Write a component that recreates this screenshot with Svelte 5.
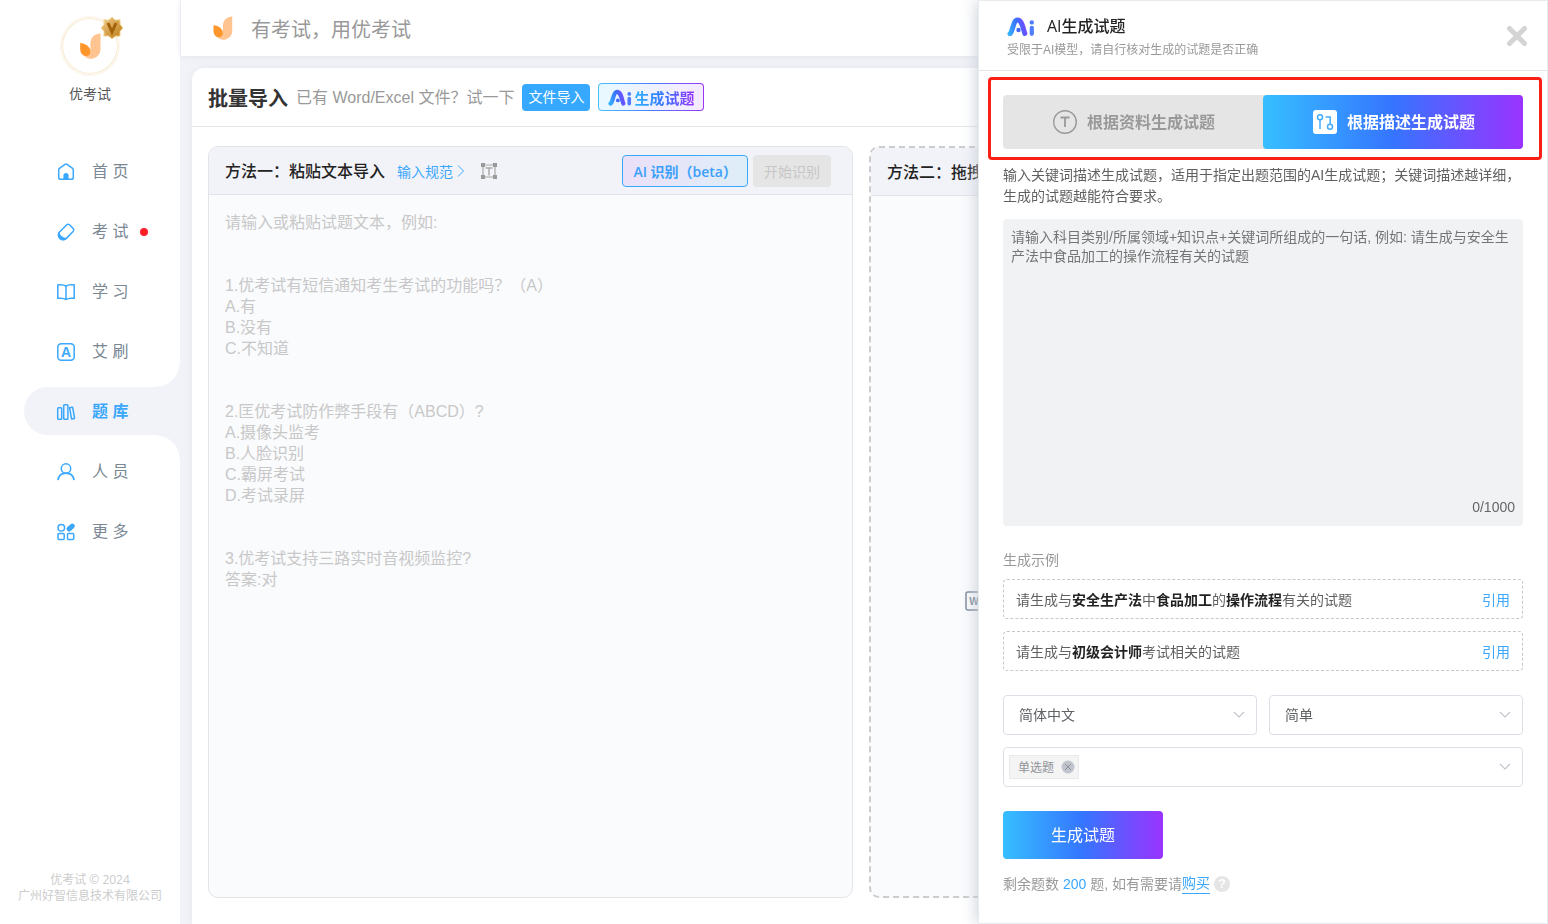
<svelte:head>
  <title>批量导入 - 优考试</title>
</svelte:head>

<script>
  const menu = [
    { icon: 'home', label: '首 页' },
    { icon: 'exam', label: '考 试', dot: true },
    { icon: 'book', label: '学 习' },
    { icon: 'brush', label: '艾 刷' },
    { icon: 'bank', label: '题 库', active: true },
    { icon: 'user', label: '人 员' },
    { icon: 'more', label: '更 多' }
  ];

  const sample = `请输入或粘贴试题文本，例如:


1.优考试有短信通知考生考试的功能吗？（A）
A.有
B.没有
C.不知道


2.匡优考试防作弊手段有（ABCD）?
A.摄像头监考
B.人脸识别
C.霸屏考试
D.考试录屏


3.优考试支持三路实时音视频监控?
答案:对`;

  // odd parts are highlighted
  const examples = [
    ['请生成与', '安全生产法', '中', '食品加工', '的', '操作流程', '有关的试题'],
    ['请生成与', '初级会计师', '考试相关的试题']
  ];

  let source = $state('');
  let prompt = $state('');
  let tab = $state('desc');
  let open = $state(true);
  let tags = $state(['单选题']);
  let picked = $state('');

  function addTag() {
    if (picked && !tags.includes(picked)) tags.push(picked);
    picked = '';
  }

  function removeTag(tag) {
    tags = tags.filter((t) => t !== tag);
  }
</script>

{#snippet flame(width, height)}
  <svg {width} {height} viewBox="0 0 21 26" aria-hidden="true">
    <path d="M20.5 .3V16a9.5 9.5 0 0 1-18 4.5l7.9-2V11C10.400 5 14 1 20.500 .3z" fill="#ffc48f" />
    <path d="M.2 10C6 10.500 10.400 14 10.400 18.500c0 2.500-1.600 4.500-4.200 4.500C2.500 23 .2 20 .2 16z" fill="#ff962b" />
  </svg>
{/snippet}

{#snippet aiLogo(id, width, height)}
  <svg {width} {height} viewBox="0 0 28 20" fill="none" aria-hidden="true">
    <defs>
      <linearGradient {id} gradientUnits="userSpaceOnUse" x1="1" y1="15" x2="21" y2="10">
        <stop offset="0" stop-color="#36b4ff" />
        <stop offset=".5" stop-color="#3a70ff" />
        <stop offset="1" stop-color="#8540ff" />
      </linearGradient>
    </defs>
    <path d="M3 17.700C6 15.500 6 4 10.500 4c4.500 0 5.300 7.500 7.300 13.500" stroke="url(#{id})" stroke-width="5" stroke-linecap="round" />
    <circle cx="11.500" cy="14" r="2.200" fill="#4468ff" />
    <path d="M24.800 11.800v6" stroke="#4f7dff" stroke-width="4.200" stroke-linecap="round" />
    <circle cx="24.800" cy="6.400" r="2.200" fill="#4f7dff" />
  </svg>
{/snippet}

{#snippet chevron()}
  <svg class="chevron" width="12" height="8" viewBox="0 0 12 8" aria-hidden="true">
    <path d="M1 1l5 5 5-5" fill="none" stroke="#c0c4cc" stroke-width="1.200" />
  </svg>
{/snippet}

<div class="layout">
  <aside>
    <div class="avatar">
      {@render flame(21, 26)}
      <svg class="badge" width="24" height="24" viewBox="0 0 24 24" aria-hidden="true">
        <defs>
          <linearGradient id="gold" x1="0" y1="0" x2="1" y2="1">
            <stop offset="0" stop-color="#f3cf8e" />
            <stop offset="1" stop-color="#b9770f" />
          </linearGradient>
        </defs>
        <path d="M12 1l3.200 3 4.800-.3.200 4.600L23 12l-3 3.600.1 4.500-4.600.1L12 23l-3.500-3-4.600.1.100-4.500L1 12l3-3.600-.1-4.700 4.700.3z" fill="url(#gold)" stroke="#f5dc9f" />
        <path d="M8 7l4 9 4-9" fill="none" stroke="#a4630a" stroke-width="3" />
      </svg>
    </div>
    <p class="name">优考试</p>

    <nav>
      {#each menu as item}
        <a href="#{item.icon}" class:active={item.active}>
          <svg width="20" height="20" viewBox="0 0 20 20" fill="none" stroke="#3ba7fd" stroke-width="1.500" aria-hidden="true">
            {#if item.icon === 'home'}
              <path d="M2.700 7.800Q2.700 7 3.400 6.400L9 2.400Q10 1.800 11 2.400L16.600 6.400Q17.300 7 17.300 7.800V15.500Q17.300 17.300 15.500 17.300H4.500Q2.700 17.300 2.700 15.500z" />
              <path d="M7.400 17V13.500a2.600 2.600 0 0 1 5.200 0V17z" fill="#3ba7fd" stroke="none" />
            {:else if item.icon === 'exam'}
              <path d="M10.800 2.700Q12.200 1.600 13.500 2.800L17.200 6.600Q18.400 8 17.300 9.300L10.300 16.400C8.500 18 5.500 17.600 4 16C2.200 14.200 2 11.500 3.500 10z" />
              <path d="M3 11.500c1 3 3 4.500 6.700 5.200-2 1.800-4.700 1-6 -.5S2 13 3 11.500z" fill="#3ba7fd" />
            {:else if item.icon === 'book'}
              <path d="M10 4.200C8.500 3 5 2.700 1.800 3v13.300c3.200-.3 6.700 0 8.200 1.200 1.500-1.200 5-1.500 8.200-1.200V3C15 2.700 11.500 3 10 4.200zV17.500" />
            {:else if item.icon === 'brush'}
              <rect x="1.800" y="1.800" width="16.400" height="16.400" rx="3.500" />
              <text x="10" y="15" text-anchor="middle" class="glyph">A</text>
            {:else if item.icon === 'bank'}
              <rect x="1.700" y="5.700" width="4" height="11.500" rx=".8" />
              <rect x="7.700" y="2.700" width="4.200" height="14.500" rx=".8" />
              <path d="M13.600 5.800l3-.6 2 11.300-3 .6z" stroke-linejoin="round" />
            {:else if item.icon === 'user'}
              <circle cx="10" cy="6.500" r="4.700" />
              <path d="M2 18.200c.6-4.300 3.700-7 8-7s7.400 2.700 8 7" stroke-width="1.700" />
            {:else}
              <circle cx="5.300" cy="5.800" r="3.300" />
              <rect x="2" y="11.600" width="6.200" height="6" rx="1" />
              <rect x="11.500" y="11.600" width="6.200" height="6" rx="1" />
              <path d="M13 7l3.300-2.800" stroke-width="5" stroke-linecap="round" />
            {/if}
          </svg>
          <span>{item.label}</span>
          {#if item.dot}<i class="dot"></i>{/if}
        </a>
      {/each}
    </nav>

    <footer>优考试 © 2024<br />广州好智信息技术有限公司</footer>
  </aside>

  <main>
    <header class="topbar">
      {@render flame(20, 24)}
      <span>有考试，用优考试</span>
    </header>

    <section class="card">
      <div class="card-head">
        <h1>批量导入</h1>
        <span class="hint">已有 Word/Excel 文件？试一下</span>
        <button class="file-btn">文件导入</button>
        <button class="ai-btn" onclick={() => (open = true)}>
          {@render aiLogo('ai-small', 24, 18)}
          <span>生成试题</span>
        </button>
      </div>

      <div class="panels">
        <div class="panel">
          <div class="panel-head">
            <h2>方法一：粘贴文本导入</h2>
            <a class="spec" href="#spec">
              输入规范
              <svg width="8" height="14" viewBox="0 0 8 14" aria-hidden="true"><path d="M1 1.500l5.500 5.500L1 12.500" fill="none" stroke="#3ba7fd" /></svg>
            </a>
            <svg width="16" height="16" viewBox="0 0 16 16" fill="none" aria-hidden="true">
              <path d="M2 2h12v12H2z" stroke="#aaa" stroke-width="1.200" />
              <path d="M4.500 5h7M8 5v7.500" stroke="#aaa" stroke-width="1.500" />
              <path d="M0 0h4v4H0zM12 0h4v4h-4zM0 12h4v4H0zM12 12h4v4h-4z" fill="#999" />
            </svg>
            <button class="beta-btn">AI 识别（beta）</button>
            <button class="start-btn" disabled>开始识别</button>
          </div>
          <textarea aria-label="试题文本" placeholder={sample} bind:value={source}></textarea>
        </div>

        <div class="panel drop">
          <div class="panel-head">
            <h2>方法二：拖拽</h2>
          </div>
          <div class="drop-body">
            <svg width="18" height="20" viewBox="0 0 18 20" aria-hidden="true">
              <rect x="1" y="1" width="16" height="18" rx="2" fill="none" stroke="#7d8b99" stroke-width="1.500" />
              <text x="9" y="14" text-anchor="middle" class="word">W</text>
            </svg>
          </div>
        </div>
      </div>
    </section>
  </main>
</div>

{#if open}
  <div class="drawer" role="dialog" aria-labelledby="drawer-title">
    <header>
      <div class="heading">
        <div class="title">
          {@render aiLogo('ai-large', 28, 20)}
          <h3 id="drawer-title">AI生成试题</h3>
        </div>
        <p>受限于AI模型，请自行核对生成的试题是否正确</p>
      </div>
      <button class="close" aria-label="关闭" onclick={() => (open = false)}>
        <svg width="20" height="20" viewBox="0 0 20 20"><path d="M2.500 2.500l15 15M17.500 2.500l-15 15" stroke="#d4d4d4" stroke-width="5" stroke-linecap="round" /></svg>
      </button>
    </header>

    <div class="frame">
      <div class="tabs">
        <button class:on={tab === 'file'} onclick={() => (tab = 'file')}>
          <svg width="24" height="24" viewBox="0 0 24 24" fill="none" stroke="currentColor" aria-hidden="true">
            <circle cx="12" cy="12" r="11.300" stroke-width="1.400" />
            <path d="M7.500 7.500h9M12 7.500v9.500" stroke-width="1.800" />
          </svg>
          <span>根据资料生成试题</span>
        </button>
        <button class:on={tab === 'desc'} onclick={() => (tab = 'desc')}>
          <svg width="24" height="24" viewBox="0 0 24 24" fill="none" stroke="#45adff" stroke-width="1.500" aria-hidden="true">
            <rect width="24" height="24" rx="3" fill="#fff" stroke="none" />
            <circle cx="7" cy="7.300" r="2.500" />
            <path d="M7 10v9M12.500 7H17.200V14" />
            <circle cx="17" cy="16.700" r="2.500" />
          </svg>
          <span>根据描述生成试题</span>
        </button>
      </div>
    </div>

    <div class="body">
      <p class="intro">输入关键词描述生成试题，适用于指定出题范围的AI生成试题；关键词描述越详细，生成的试题越能符合要求。</p>

      <div class="prompt">
        <textarea
          aria-label="试题描述"
          maxlength="1000"
          placeholder="请输入科目类别/所属领域+知识点+关键词所组成的一句话, 例如: 请生成与安全生产法中食品加工的操作流程有关的试题"
          bind:value={prompt}
        ></textarea>
        <span>{prompt.length}/1000</span>
      </div>

      <p class="label">生成示例</p>
      {#each examples as parts}
        <div class="example">
          <span>{#each parts as part, i}{#if i % 2}<b>{part}</b>{:else}{part}{/if}{/each}</span>
          <button onclick={() => (prompt = parts.join(''))}>引用</button>
        </div>
      {/each}

      <div class="selects">
        <div class="field">
          <select aria-label="语言">
            <option>简体中文</option>
            <option>English</option>
          </select>
          {@render chevron()}
        </div>
        <div class="field">
          <select aria-label="难度">
            <option>简单</option>
            <option>中等</option>
            <option>困难</option>
          </select>
          {@render chevron()}
        </div>
        <div class="field wide">
          {#each tags as tag}
            <span class="tag">
              <span>{tag}</span>
              <button aria-label="移除{tag}" onclick={() => removeTag(tag)}>
                <svg width="14" height="14" viewBox="0 0 14 14"><circle cx="7" cy="7" r="6.500" fill="#c0c4cc" /><path d="M4 4l6 6M10 4l-6 6" stroke="#909399" /></svg>
              </button>
            </span>
          {/each}
          <select aria-label="题型" bind:value={picked} onchange={addTag}>
            <option value=""></option>
            <option>单选题</option>
            <option>多选题</option>
            <option>判断题</option>
          </select>
          {@render chevron()}
        </div>
      </div>

      <button class="submit">生成试题</button>

      <p class="remain">
        剩余题数&nbsp;<b>200</b>&nbsp;题, 如有需要请<a href="#buy">购买</a>
        <i class="help">?</i>
      </p>
    </div>
  </div>
{/if}

<style>
  :global(body) {
    background: #f2f3f8;
    color: #333;
    font-family: "Liberation Sans", "Noto Sans CJK SC", sans-serif;
    font-size: 14px;
  }

  * {
    box-sizing: border-box;
  }

  h1,
  h2,
  h3,
  p {
    margin: 0;
  }

  button,
  select,
  textarea {
    font: inherit;
    color: inherit;
  }

  button {
    border: 0;
    padding: 0;
    background: none;
    cursor: pointer;
    white-space: nowrap;
  }

  a {
    color: #3ba7fd;
    text-decoration: none;
  }

  svg {
    flex: none;
    display: block;
  }

  .layout {
    display: flex;
    min-height: 100vh;
  }

  aside {
    flex: none;
    display: flex;
    flex-direction: column;
    width: 180px;
    padding: 16px 0 20px;
    background: #fff;
  }

  .avatar {
    position: relative;
    display: flex;
    align-items: center;
    justify-content: center;
    align-self: center;
    width: 60px;
    height: 60px;
    border: 2px solid #fcf6ec;
    border-radius: 50%;
    box-shadow: inset 0 0 0 1px #f7e8cf;
  }

  .badge {
    position: absolute;
    top: -2px;
    right: -6px;
  }

  .name {
    margin: 8px 0 43px;
    line-height: 20px;
    text-align: center;
    color: #555;
  }

  nav {
    display: flex;
    flex-direction: column;
    gap: 12px;
  }

  nav a {
    position: relative;
    display: flex;
    align-items: center;
    height: 48px;
    margin-left: 24px;
    padding: 2px 0 0 32px;
    border-radius: 24px 0 0 24px;
    color: #7a8794;
    font-size: 16px;
  }

  nav span {
    margin-left: 16px;
    padding-bottom: 4px;
  }

  nav a.active {
    background: #f2f3f8;
    color: #3ba7fd;
    font-weight: bold;
  }

  nav a.active::before,
  nav a.active::after {
    content: "";
    position: absolute;
    right: 0;
    width: 24px;
    height: 24px;
  }

  nav a.active::before {
    bottom: 100%;
    background: radial-gradient(circle at 0 0, #fff 23px, #f2f3f8 24px);
  }

  nav a.active::after {
    top: 100%;
    background: radial-gradient(circle at 0 100%, #fff 23px, #f2f3f8 24px);
  }

  .dot {
    width: 8px;
    height: 8px;
    margin-left: 12px;
    border-radius: 50%;
    background: #ff1f26;
  }

  .glyph {
    fill: #3ba7fd;
    stroke: none;
    font: bold 14px "Liberation Sans", sans-serif;
  }

  footer {
    margin-top: auto;
    color: #ccc;
    font-family: "Open Sans", "Noto Sans CJK SC", sans-serif;
    font-size: 12px;
    line-height: 16px;
    text-align: center;
  }

  main {
    flex: 1;
    min-width: 0;
    display: flex;
    flex-direction: column;
  }

  .topbar {
    display: flex;
    align-items: center;
    gap: 18px;
    height: 56px;
    margin-left: 1px;
    padding-left: 32px;
    background: #fff;
    box-shadow: 0 1px 6px #e2e4ec;
    color: #999;
    font-size: 20px;
  }

  .card {
    flex: 1;
    display: flex;
    flex-direction: column;
    margin: 12px 18px 0 12px;
    border-radius: 12px 12px 0 0;
    background: #fff;
    box-shadow: 0 0 8px #e4e6ee;
  }

  .card-head {
    display: flex;
    align-items: center;
    gap: 8px;
    height: 59px;
    padding: 0 16px;
    border-bottom: 1px solid #e5e5e5;
    white-space: nowrap;
  }

  h1 {
    font-size: 20px;
  }

  .hint {
    padding-bottom: 2px;
    color: #999;
    font-size: 16px;
  }

  .file-btn {
    height: 27px;
    padding: 0 6px 2px;
    border-radius: 4px;
    background: #36a9ff;
    color: #fff;
  }

  .ai-btn {
    display: flex;
    align-items: center;
    gap: 2px;
    height: 28px;
    padding: 0 9px;
    border: 1px solid transparent;
    border-radius: 4px;
    background:
      linear-gradient(90deg, #e8f8ff, #eef1ff 50%, #f5eaff) padding-box,
      linear-gradient(90deg, #4cc0ff, #4a80ff 50%, #9a35f5) border-box;
    font-size: 15px;
    font-weight: bold;
  }

  .ai-btn span {
    background: linear-gradient(90deg, #30b5ff, #3575ff 50%, #9633ff);
    background-clip: text;
    color: transparent;
  }

  .panels {
    flex: 1;
    display: grid;
    grid-template-columns: 1fr 1fr;
    gap: 16px;
    padding: 19px 16px 26px;
  }

  .panel {
    display: flex;
    flex-direction: column;
    min-width: 0;
    border: 1px solid #e3e4e8;
    border-radius: 10px;
    background: #fafbfd;
    overflow: hidden;
  }

  .panel-head {
    display: flex;
    align-items: center;
    height: 48px;
    padding: 0 21px 0 16px;
    border-bottom: 1px solid #e3e4e8;
    background: #f2f3f8;
    white-space: nowrap;
  }

  h2,
  h3 {
    font-size: 16px;
    font-weight: 500;
    color: #222;
  }

  h2 {
    padding-bottom: 2px;
  }

  .spec {
    display: flex;
    align-items: center;
    gap: 4px;
    margin: 0 16px 0 12px;
  }

  .beta-btn {
    height: 32px;
    margin-left: auto;
    padding: 0 10px;
    border: 1px solid #36a9ff;
    border-radius: 4px;
    background: linear-gradient(90deg, #ebe0f8, #deeef8);
    color: #3ba0fb;
    font-family: "Open Sans", "Noto Sans CJK SC", sans-serif;
    font-weight: 600;
  }

  .start-btn {
    height: 32px;
    margin-left: 5px;
    padding: 0 11px;
    border-radius: 4px;
    background: #e5e5e5;
    color: #c6c6c6;
  }

  .panel textarea {
    flex: 1;
    padding: 17px 16px;
    border: 0;
    outline: none;
    resize: none;
    background: none;
    font-size: 16px;
    line-height: 21px;
  }

  .panel textarea::placeholder {
    color: #c8c8c8;
  }

  .drop {
    border: 2px dashed #ccc;
  }

  .drop-body {
    padding: 395px 94px 0;
  }

  .word {
    fill: #7d8b99;
    font: bold 10px "Liberation Sans", sans-serif;
  }

  .drawer {
    position: fixed;
    inset: 0 0 0 auto;
    width: 570px;
    max-width: 100%;
    overflow: auto;
    border: 1px solid #e6ebf0;
    background: #fff;
    box-shadow: 0 0 16px #c3cad4;
  }

  .drawer header {
    display: flex;
    justify-content: space-between;
    align-items: center;
    height: 70px;
    padding: 0 20px 0 28px;
    border-bottom: 1px solid #e5e5e5;
  }

  .title {
    display: flex;
    align-items: center;
    gap: 12px;
    line-height: 28px;
  }

  h3 {
    font-family: "Open Sans", "Noto Sans CJK SC", sans-serif;
  }

  .heading p {
    color: #999;
    font-size: 12px;
    line-height: 20px;
  }

  .frame {
    margin: 6px 5px 0 9px;
    padding: 15px 16px 8px 12px;
    border: 3px solid #fb2015;
    border-radius: 4px;
  }

  .tabs {
    display: flex;
    border-radius: 4px;
    background: #e5e5e5;
  }

  .tabs button {
    flex: 1;
    display: flex;
    align-items: center;
    justify-content: center;
    gap: 10px;
    height: 54px;
    padding-left: 2px;
    border-radius: 4px;
    color: #999;
    font-size: 16px;
    font-weight: bold;
  }

  .tabs span {
    padding-bottom: 2px;
  }

  .tabs button.on,
  .submit {
    background: linear-gradient(90deg, #36bfff, #3575ff 50%, #9a33ff);
    color: #fff;
  }

  .body {
    padding: 5px 24px 20px;
  }

  .intro {
    color: #606060;
    line-height: 21px;
  }

  .prompt {
    display: flex;
    flex-direction: column;
    height: 307px;
    margin: 12px 0 24px;
    padding: 9px 8px;
    border-radius: 4px;
    background: #f1f2f4;
    color: #666;
  }

  .prompt textarea {
    flex: 1;
    padding: 0;
    border: 0;
    outline: none;
    resize: none;
    background: none;
    line-height: 19px;
  }

  .prompt textarea::placeholder {
    color: #757575;
  }

  .prompt span {
    align-self: flex-end;
    line-height: 20px;
  }

  .label {
    color: #999;
    line-height: 20px;
  }

  .example {
    display: flex;
    align-items: center;
    justify-content: space-between;
    height: 40px;
    margin: 9px 0 12px;
    padding: 0 12px;
    border: 1px dashed #c8c8c8;
    border-radius: 4px;
    color: #606060;
  }

  .example + .example {
    margin-top: 0;
  }

  .example b {
    color: #222;
  }

  .example button {
    color: #3ba7fd;
  }

  .selects {
    display: grid;
    grid-template-columns: 1fr 1fr;
    gap: 12px;
    margin: 24px 0;
  }

  .field {
    position: relative;
    display: flex;
    align-items: center;
    height: 40px;
    border: 1px solid #dcdfe6;
    border-radius: 4px;
    color: #606266;
  }

  .field select {
    flex: 1;
    min-width: 0;
    height: 100%;
    padding: 0 30px 0 15px;
    border: 0;
    outline: none;
    appearance: none;
    background: none;
  }

  .wide {
    grid-column: span 2;
    padding-left: 5px;
  }

  .chevron {
    position: absolute;
    right: 11px;
    pointer-events: none;
  }

  .tag {
    display: flex;
    align-items: center;
    gap: 7px;
    height: 24px;
    margin-right: 6px;
    padding: 0 3px 0 8px;
    border: 1px solid #e9e9eb;
    background: #f4f4f5;
    color: #909399;
    font-size: 12px;
  }

  .tag span {
    padding-bottom: 2px;
  }

  .submit {
    display: block;
    width: 160px;
    height: 48px;
    padding-bottom: 2px;
    border-radius: 4px;
    font-size: 16px;
  }

  .remain {
    display: flex;
    align-items: center;
    margin-top: 14px;
    color: #999;
    line-height: 20px;
  }

  .remain b {
    color: #3ba7fd;
    font-weight: normal;
  }

  .remain a {
    border-bottom: 1px solid #3ba7fd;
  }

  .help {
    width: 16px;
    height: 16px;
    margin-left: 4px;
    border-radius: 50%;
    background: #e5e5e5;
    color: #fff;
    font-size: 13px;
    font-style: normal;
    font-weight: bold;
    line-height: 16px;
    text-align: center;
  }
</style>
